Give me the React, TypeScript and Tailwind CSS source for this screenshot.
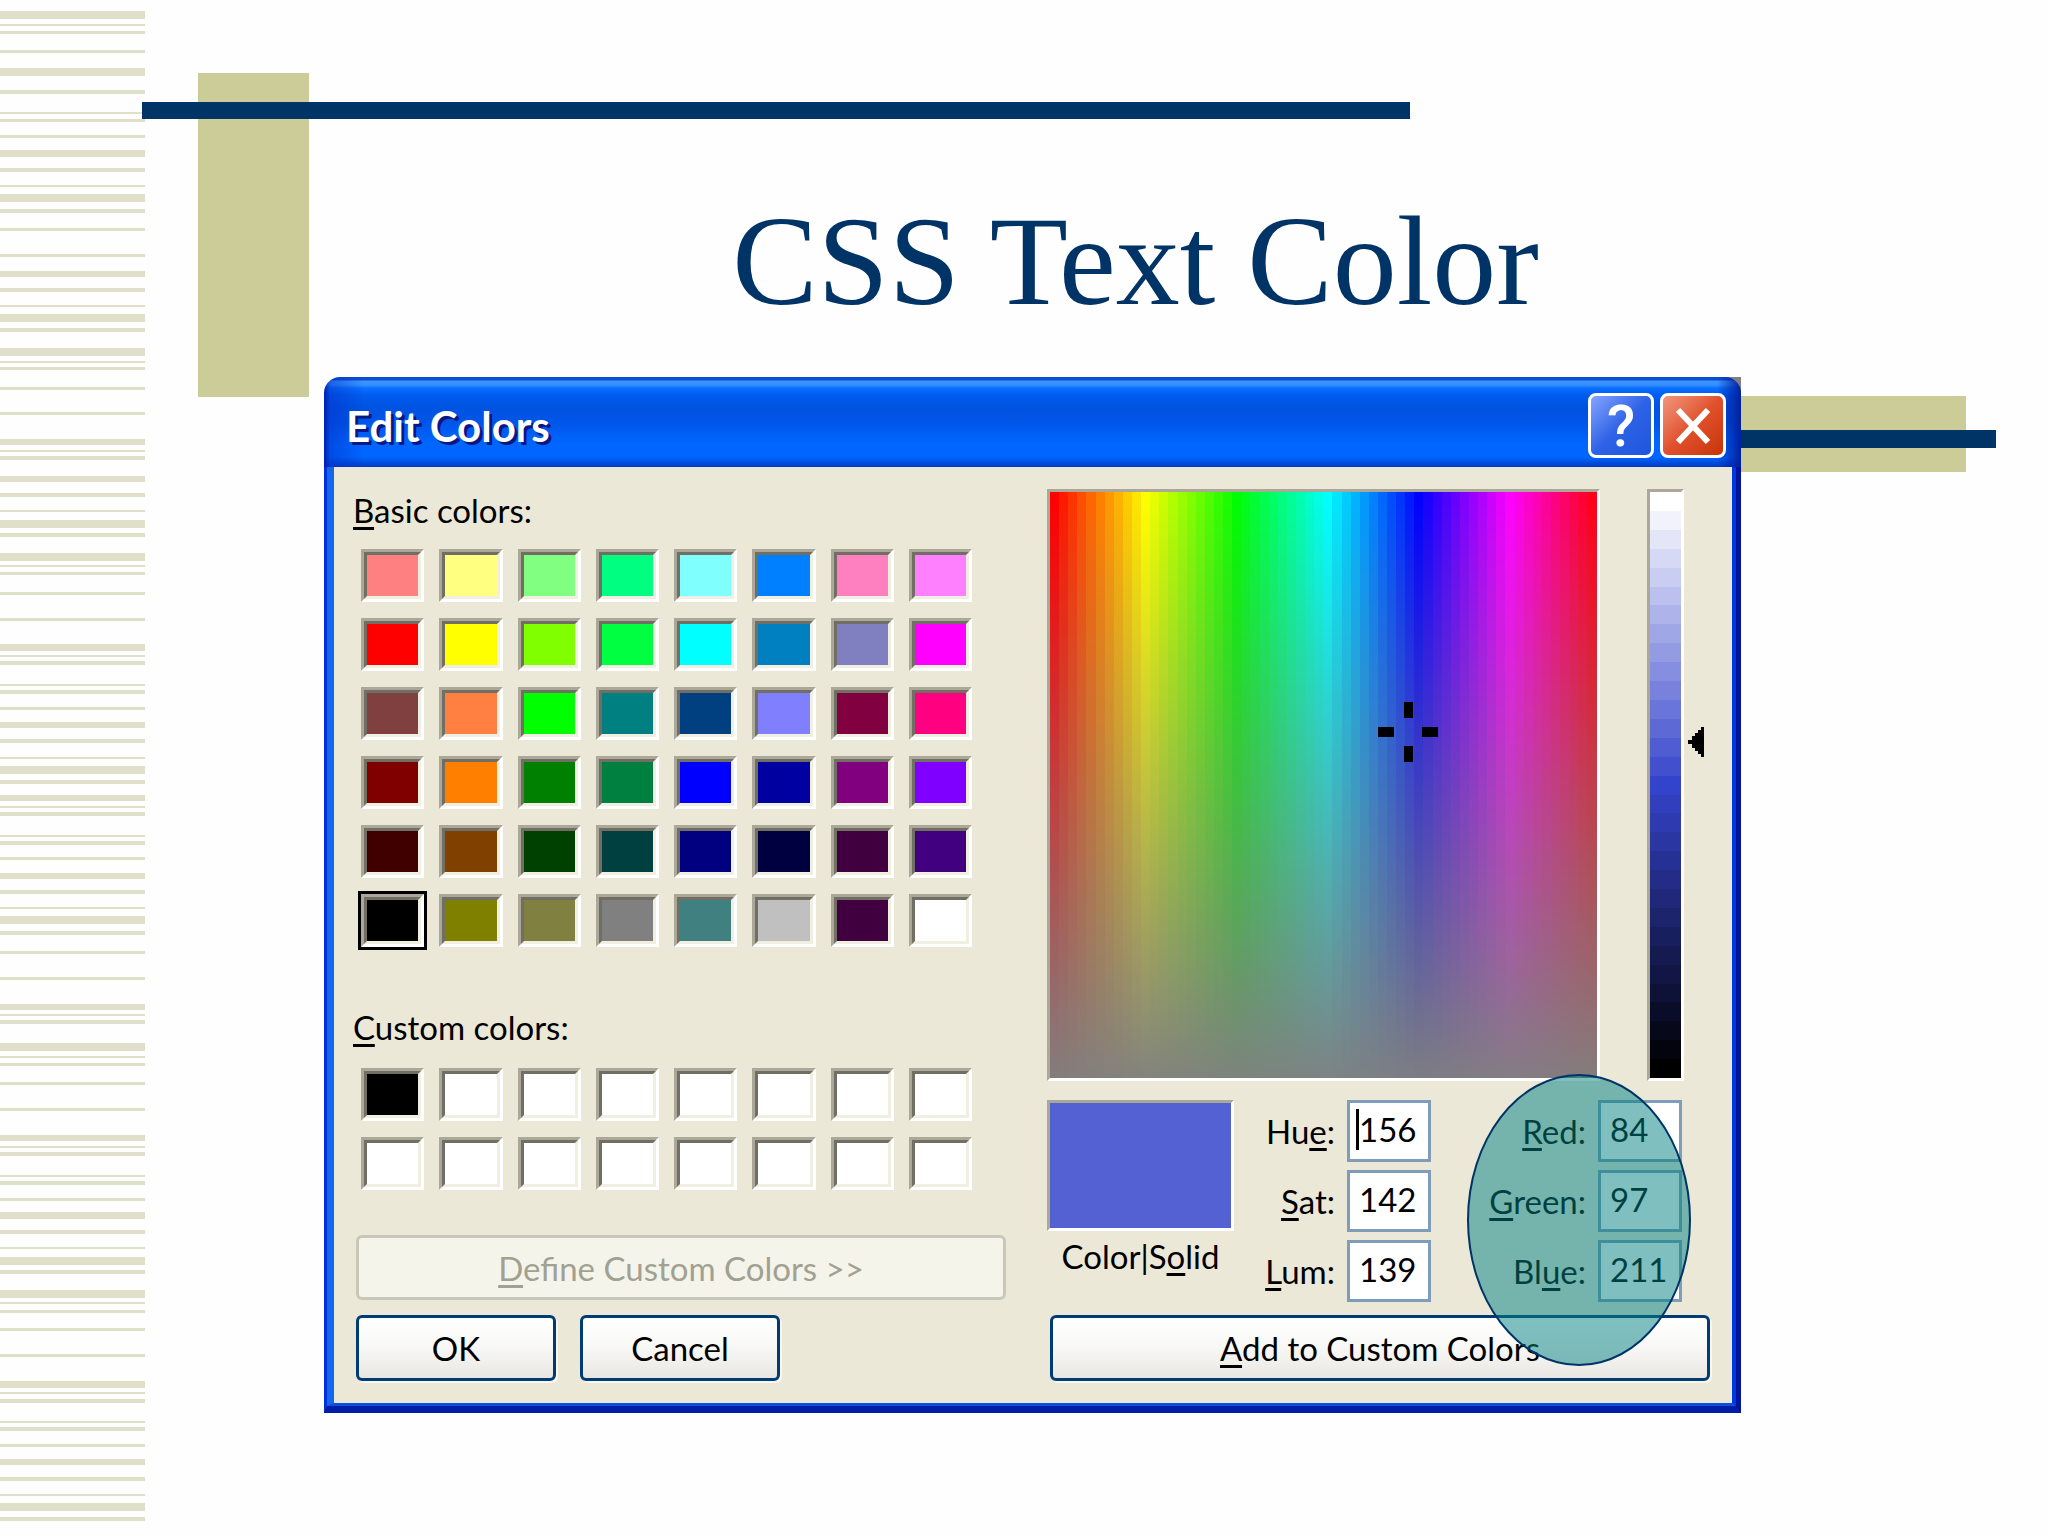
import { useState } from 'react';

const stripes = [
  [11, 8], [24, 2], [31, 3], [50, 3], [68, 8], [90, 4], [112, 2], [119, 3], [135, 3], [150, 7],
  [168, 4], [185, 2], [194, 8], [209, 4], [228, 3], [254, 3], [271, 6], [288, 4], [305, 2], [314, 8],
  [328, 4], [348, 8], [361, 2], [367, 3], [387, 3], [412, 3], [439, 6], [450, 2], [456, 4], [476, 6],
  [493, 4], [510, 2], [520, 8], [533, 4], [553, 8], [565, 2], [572, 3], [592, 3], [618, 3], [644, 7],
  [655, 2], [661, 4], [684, 2], [690, 4], [707, 3], [722, 6], [739, 4], [757, 2], [766, 8], [780, 4],
  [795, 6], [806, 2], [812, 4], [835, 2], [841, 4], [857, 3], [873, 6], [890, 4], [907, 2], [916, 8],
  [931, 4], [951, 3], [977, 3], [1004, 6], [1014, 2], [1020, 4], [1043, 8], [1056, 2], [1063, 3], [1082, 3],
  [1108, 3], [1135, 6], [1146, 2], [1152, 4], [1175, 2], [1181, 4], [1198, 3], [1212, 7], [1230, 4], [1247, 2],
  [1257, 8], [1270, 4], [1290, 8], [1302, 2], [1310, 3], [1328, 3], [1354, 3], [1381, 7], [1392, 2], [1399, 4],
  [1421, 2], [1427, 4], [1444, 3], [1459, 6], [1477, 4], [1494, 2], [1503, 8], [1517, 4],
];

const basicColors = [
  '#ff8080', '#ffff80', '#80ff80', '#00ff80', '#80ffff', '#0080ff', '#ff80c0', '#ff80ff',
  '#ff0000', '#ffff00', '#80ff00', '#00ff40', '#00ffff', '#0080c0', '#8080c0', '#ff00ff',
  '#804040', '#ff8040', '#00ff00', '#008080', '#004080', '#8080ff', '#800040', '#ff0080',
  '#800000', '#ff8000', '#008000', '#008040', '#0000ff', '#0000a0', '#800080', '#8000ff',
  '#400000', '#804000', '#004000', '#004040', '#000080', '#000040', '#400040', '#400080',
  '#000000', '#808000', '#808040', '#808080', '#408080', '#c0c0c0', '#400040', '#ffffff',
];

const customColors = ['#000000', ...Array(15).fill('#ffffff')];

const hueSteps = Array.from({ length: 60 }, (_, i) => `hsl(${i * 6} 100% 50%)`);
const lumSteps = Array.from({ length: 31 }, (_, i) => `hsl(234 59% ${100 - (i * 100) / 30}%)`);

const hslFields = [
  { id: 'hue', before: 'Hu', key: 'e', after: ':', value: '156' },
  { id: 'sat', before: '', key: 'S', after: 'at:', value: '142' },
  { id: 'lum', before: '', key: 'L', after: 'um:', value: '139' },
];

const rgbFields = [
  { id: 'red', before: '', key: 'R', after: 'ed:', value: '84' },
  { id: 'green', before: '', key: 'G', after: 'reen:', value: '97' },
  { id: 'blue', before: 'Bl', key: 'u', after: 'e:', value: '211' },
];

const sunken = 'border-[3px] border-t-[#aca899] border-l-[#aca899] border-r-white border-b-white';

const pushButton =
  'h-[66px] rounded-md border-[3px] border-[#003c74] bg-linear-to-b from-white via-[#f7f7f5] to-[#e9e7e2] text-center shadow-[2px_2px_0_#f8f6ee]';

// Underlined access key, as in "_B_asic colors"
function Key({ children }: { children: string }) {
  return <span className="underline decoration-[3px] underline-offset-4 [text-decoration-skip-ink:none]">{children}</span>;
}

function Swatch({ color, selected, onClick }: { color: string; selected: boolean; onClick: () => void }) {
  return (
    <button
      type="button"
      aria-label={color}
      onClick={onClick}
      className={`h-[53px] ${sunken} ${selected ? 'outline-[3px] outline-black' : ''}`}
    >
      <span
        className="block h-full border-[3px] border-t-[#716f64] border-l-[#716f64] border-r-[#f1efe2] border-b-[#f1efe2]"
        style={{ backgroundColor: color }}
      />
    </button>
  );
}

function FieldGroup({ fields }: { fields: typeof hslFields }) {
  return (
    <div className="flex flex-col gap-2">
      {fields.map((field) => (
        <div key={field.id} className="flex items-center justify-end gap-3">
          <label htmlFor={field.id}>
            {field.before}
            <Key>{field.key}</Key>
            {field.after}
          </label>
          <div className="relative">
            <input
              id={field.id}
              defaultValue={field.value}
              className="block h-[62px] w-[84px] border-[3px] border-[#7f9db9] bg-white pb-1 pl-[9px]"
            />
            {field.id === 'hue' && <span className="absolute top-[9px] left-[9px] h-[41px] w-[3px] bg-black" />}
          </div>
        </div>
      ))}
    </div>
  );
}

function TitleBar() {
  return (
    <div className="bg-linear-to-r from-[#fefefe] from-50% to-[#808080] to-50%">
      <header className="flex h-[90px] items-center justify-between rounded-t-[16px] bg-[linear-gradient(to_right,#0020b0_0,#0030c880_6px,transparent_40px,transparent_calc(100%-24px),#0020a0_100%),linear-gradient(to_bottom,#0a4fd0_0,#0a4fd0_3px,#3d95ff_4px,#3590ff_8px,#0a70ff_11px,#005cf0_18px,#0053e1_30px,#0055e8_45px,#0066ff_66px,#0066ff_80px,#0043cf_88px,#003dc8_90px)] pt-[7px] pr-[15px] pl-[22px]">
        <h2 className="text-[42px] leading-[46px] font-bold text-white [text-shadow:3px_3px_0_#0a1883]">Edit Colors</h2>
        <div className="flex gap-[6px]">
          <button
            type="button"
            aria-label="Help"
            className="flex h-[65px] w-[66px] items-center justify-center rounded-lg border-[3px] border-white bg-linear-to-br from-[#86a4ff] via-[#2f62e6] to-[#1c56dc] font-['Roboto',sans-serif] text-[58px] leading-none font-medium text-white"
          >
            ?
          </button>
          <button
            type="button"
            aria-label="Close"
            className="flex h-[65px] w-[66px] items-center justify-center rounded-lg border-[3px] border-white bg-linear-to-br from-[#f0967c] via-[#e0502c] to-[#c83400]"
          >
            <svg viewBox="0 0 36 36" className="size-9" fill="none" stroke="white" strokeWidth={6}>
              <path d="M3 2L33 34M33 2L3 34" />
            </svg>
          </button>
        </div>
      </header>
    </div>
  );
}

function ColorPicker() {
  return (
    <div className="flex">
      <div className={`relative flex h-[592px] flex-1 ${sunken}`}>
        {hueSteps.map((color) => (
          <div key={color} className="flex-1" style={{ backgroundColor: color }} />
        ))}
        <div className="absolute inset-0 bg-linear-to-b from-[#80808000] to-[#808080f8]" />
        <svg viewBox="0 0 60 60" className="absolute top-[210px] left-[328px] size-[60px]">
          <path d="M26 0h9v16h-9zM26 44h9v16h-9zM0 25h16v10h-16zM44 25h16v10h-16z" />
        </svg>
      </div>
      <div className={`ml-[47px] flex h-[592px] w-[37px] flex-col ${sunken}`}>
        {lumSteps.map((color) => (
          <div key={color} className="flex-1" style={{ backgroundColor: color }} />
        ))}
      </div>
      <svg viewBox="0 0 16 30" className="mt-[238px] mr-[6px] ml-[4px] h-[30px] w-4">
        <path d="M16 0v30h-3v-3h-3v-3H7v-3H4v-4H0v-4h4V9h3V6h3V3h3V0z" />
      </svg>
    </div>
  );
}

export default function App() {
  const [selected, setSelected] = useState(40);

  return (
    <div className="relative flex min-h-screen bg-[#fefefe]">
      <aside className="w-[145px] shrink-0">
        <svg viewBox="0 0 145 1536" preserveAspectRatio="none" className="h-full w-full" fill="#e0e0ca">
          {stripes.map(([y, h]) => (
            <rect key={y} y={y} width={145} height={h} />
          ))}
        </svg>
      </aside>

      {/* Slide decoration behind the content */}
      <div className="absolute top-[73px] left-[198px] h-[324px] w-[111px] bg-[#cccc99]" />
      <div className="absolute top-[102px] right-[638px] left-[142px] h-[17px] bg-[#003366]" />
      <div className="absolute top-[396px] right-[82px] h-[76px] w-[260px] bg-[#cccc99]" />
      <div className="absolute top-[430px] right-[52px] h-[18px] w-[290px] bg-[#003366]" />

      <main className="relative flex-1 pt-[198px] pr-[307px] pl-[179px]">
        <h1 className="pl-[206px] text-center font-['Liberation_Serif',serif] text-[128px] leading-[126px] text-[#003366]">
          CSS Text Color
        </h1>

        <section className="mt-[53px] font-['Lato',sans-serif] text-[33px] leading-[42px] text-black">
          <TitleBar />
          <div className="border-r-[5px] border-b-[7px] border-l-[3px] border-r-[#00139a] border-b-[#001ca4] border-l-[#0031d9]">
            <div className="grid grid-cols-[653fr_663fr] gap-[41px] border-r-4 border-b-[3px] border-l-[7px] border-r-[#0038e0] border-b-[#0a50e0] border-l-[#1168ee] bg-[#ebe8d8] pt-[22px] pr-[22px] pb-[22px] pl-[19px]">
              <div className="flex flex-col">
                <p>
                  <Key>B</Key>asic colors:
                </p>
                <div className="mt-[18px] mr-[34px] ml-2 grid grid-cols-8 gap-x-[15px] gap-y-4">
                  {basicColors.map((color, i) => (
                    <Swatch key={i} color={color} selected={i === selected} onClick={() => setSelected(i)} />
                  ))}
                </div>
                <p className="mt-[59px]">
                  <Key>C</Key>ustom colors:
                </p>
                <div className="mt-[20px] mr-[34px] ml-2 grid grid-cols-8 gap-x-[15px] gap-y-4">
                  {customColors.map((color, i) => (
                    <Swatch key={i} color={color} selected={i + 48 === selected} onClick={() => setSelected(i + 48)} />
                  ))}
                </div>
                <button
                  type="button"
                  disabled
                  className="mt-[45px] ml-[3px] h-[65px] rounded-md border-[3px] border-[#c9c7ba] bg-[#f5f4ea] text-[#a1a192]"
                >
                  <Key>D</Key>efine Custom Colors &gt;&gt;
                </button>
                <div className="mt-[15px] ml-[3px] flex gap-6">
                  <button type="button" className={`w-[200px] ${pushButton}`}>
                    OK
                  </button>
                  <button type="button" className={`w-[200px] ${pushButton}`}>
                    Cancel
                  </button>
                </div>
              </div>

              <div className="flex flex-col">
                <ColorPicker />
                <div className="relative mt-[19px] grid grid-cols-[187px_197fr_251fr] pr-7">
                  <div className="text-center">
                    <div className={`h-[131px] bg-[#5461d3] ${sunken}`} />
                    <p className="mt-1">
                      Color|S<Key>o</Key>lid
                    </p>
                  </div>
                  <FieldGroup fields={hslFields} />
                  <FieldGroup fields={rgbFields} />
                  {/* Highlight over the RGB fields */}
                  <div className="pointer-events-none absolute -top-[26px] right-[19px] z-10 h-[292px] w-[224px] rounded-[50%] border-2 border-[#003366] bg-[#00808080]" />
                </div>
                <button type="button" className={`mt-auto ml-[3px] ${pushButton}`}>
                  <Key>A</Key>dd to Custom Colors
                </button>
              </div>
            </div>
          </div>
        </section>
      </main>
    </div>
  );
}
